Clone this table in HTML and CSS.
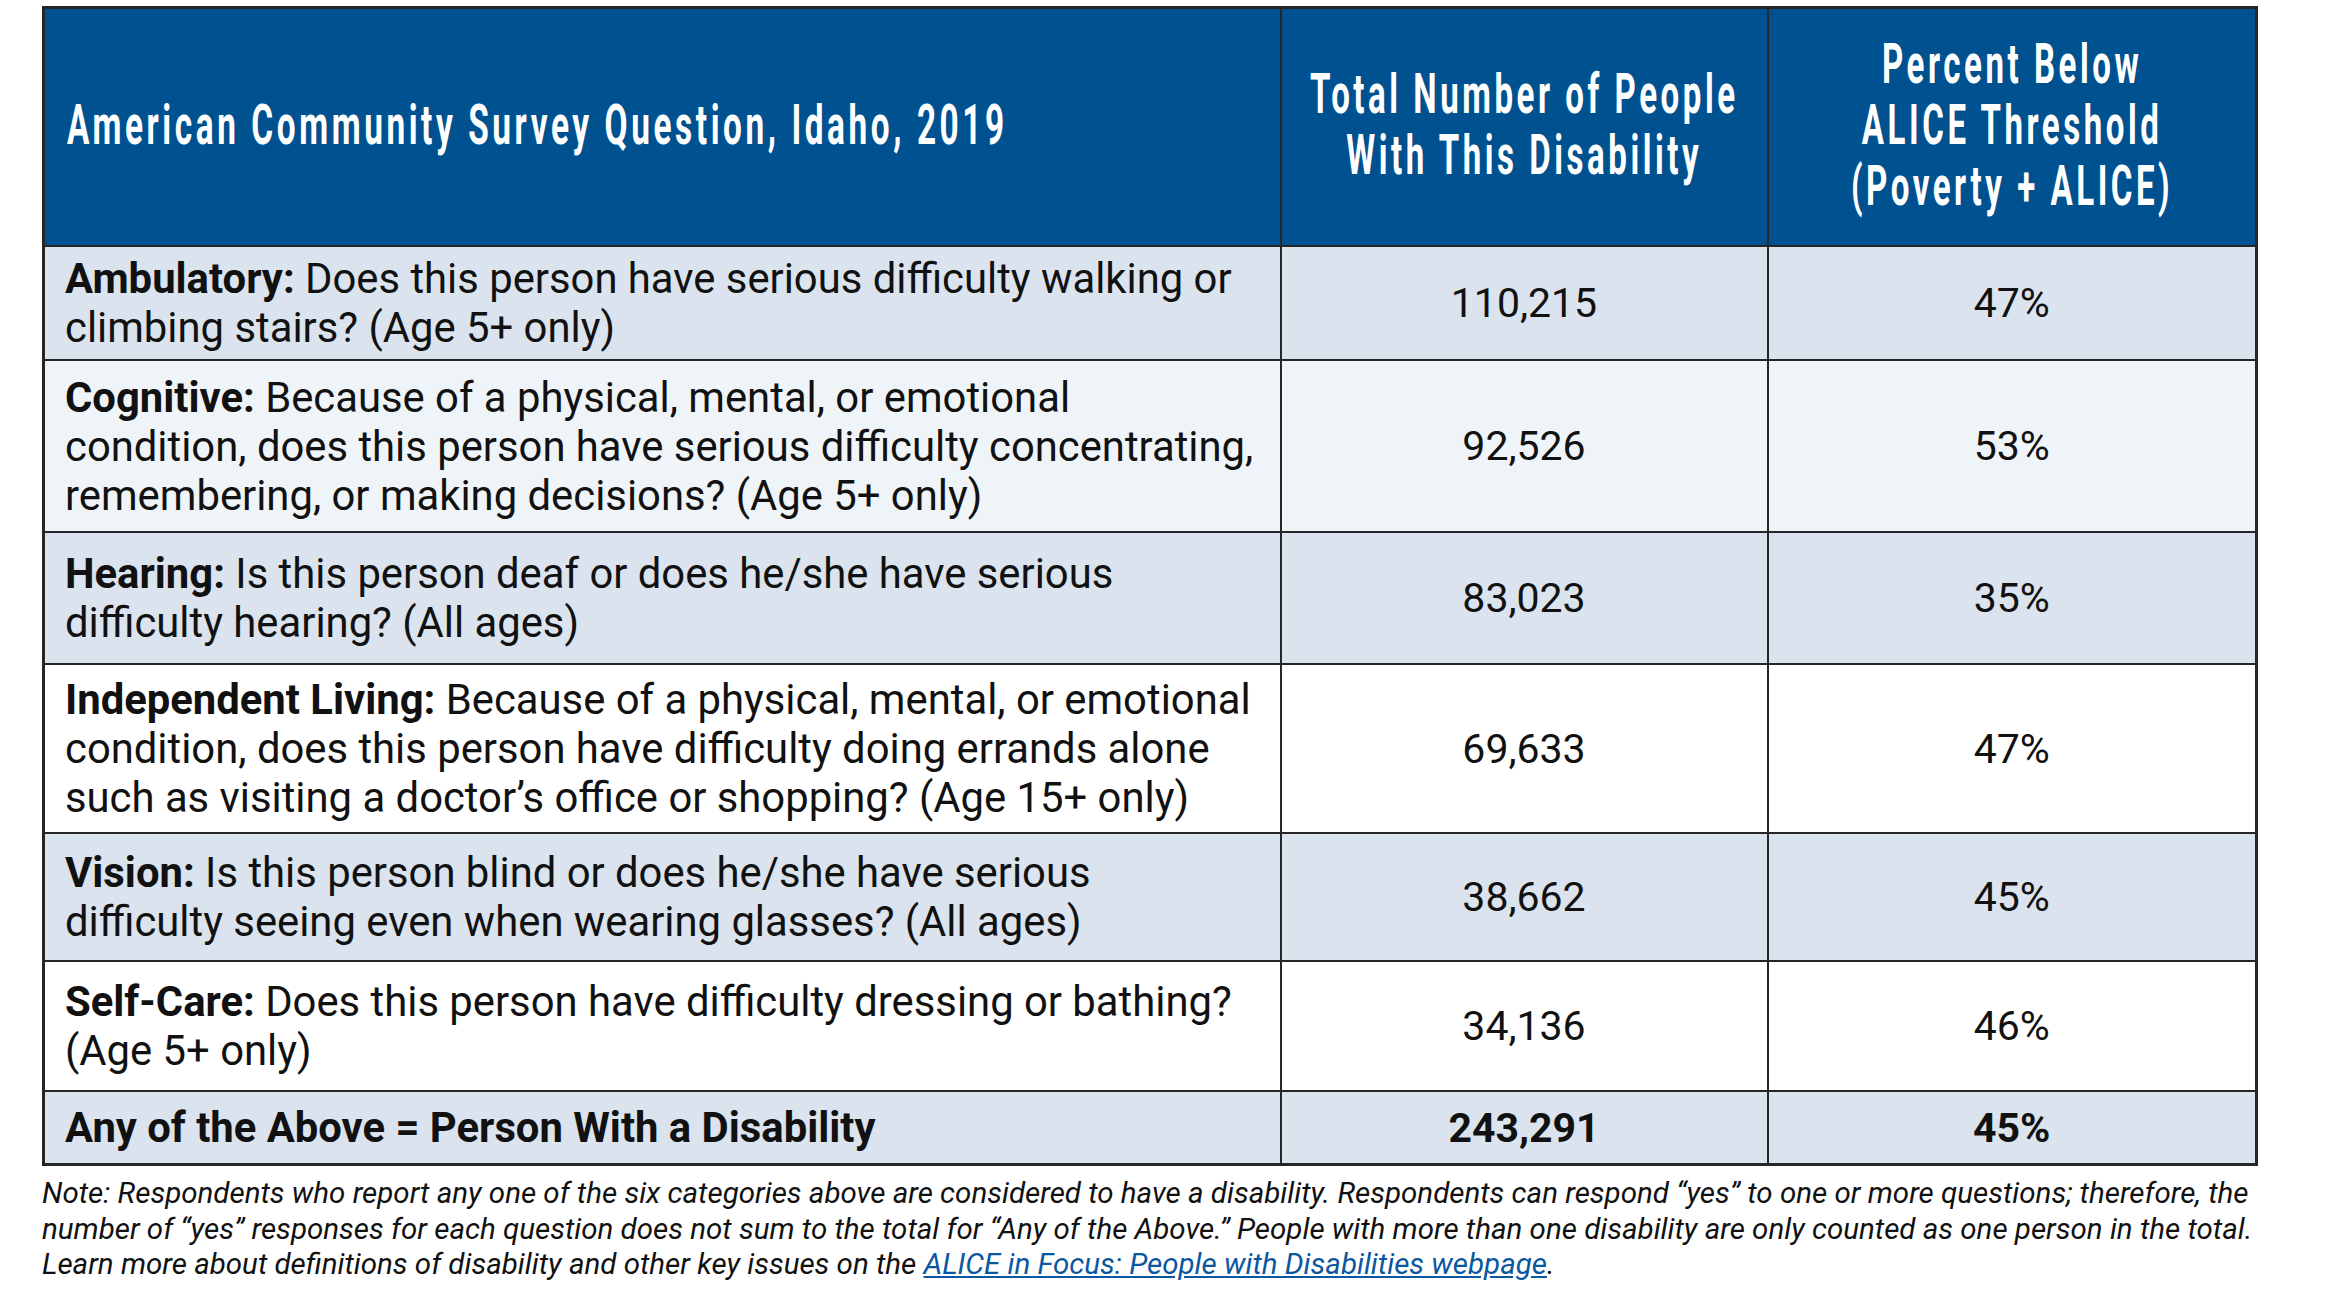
FILE: index.html
```html
<!DOCTYPE html>
<html lang="en">
<head>
<meta charset="utf-8">
<title>Disability in Idaho, 2019</title>
<link rel="stylesheet" href="styles.css">
</head>
<body>
<div class="page">
  <table class="survey">
    <colgroup>
      <col class="c-q">
      <col class="c-n">
      <col class="c-p">
    </colgroup>
    <thead>
      <tr class="r-head">
        <th class="th-q"><div class="hd-wrap hd-wrap-left"><span class="hd hd-left">American Community Survey Question, Idaho, 2019</span></div></th>
        <th class="th-c"><div class="hd-wrap"><span class="hd">Total Number of People<br>With This Disability</span></div></th>
        <th class="th-c"><div class="hd-wrap"><span class="hd">Percent Below<br>ALICE Threshold<br>(Poverty + ALICE)</span></div></th>
      </tr>
    </thead>
    <tbody>
      <tr class="r1 shade">
        <td class="q"><b>Ambulatory:</b> Does this person have serious difficulty walking or<br>climbing stairs? (Age 5+ only)</td>
        <td class="n">110,215</td>
        <td class="n">47%</td>
      </tr>
      <tr class="r2 pale">
        <td class="q"><b>Cognitive:</b> Because of a physical, mental, or emotional<br>condition, does this person have serious difficulty concentrating,<br>remembering, or making decisions? (Age 5+ only)</td>
        <td class="n">92,526</td>
        <td class="n">53%</td>
      </tr>
      <tr class="r3 shade">
        <td class="q"><b>Hearing:</b> Is this person deaf or does he/she have serious<br>difficulty hearing? (All ages)</td>
        <td class="n">83,023</td>
        <td class="n">35%</td>
      </tr>
      <tr class="r4 plain">
        <td class="q"><b>Independent Living:</b> Because of a physical, mental, or emotional<br>condition, does this person have difficulty doing errands alone<br>such as visiting a doctor’s office or shopping? (Age 15+ only)</td>
        <td class="n">69,633</td>
        <td class="n">47%</td>
      </tr>
      <tr class="r5 shade">
        <td class="q"><b>Vision:</b> Is this person blind or does he/she have serious<br>difficulty seeing even when wearing glasses? (All ages)</td>
        <td class="n">38,662</td>
        <td class="n">45%</td>
      </tr>
      <tr class="r6 plain">
        <td class="q"><b>Self-Care:</b> Does this person have difficulty dressing or bathing?<br>(Age 5+ only)</td>
        <td class="n">34,136</td>
        <td class="n">46%</td>
      </tr>
      <tr class="r-total shade">
        <td class="q"><b>Any of the Above = Person With a Disability</b></td>
        <td class="n"><b>243,291</b></td>
        <td class="n"><b>45%</b></td>
      </tr>
    </tbody>
  </table>
  <p class="note">Note: Respondents who report any one of the six categories above are considered to have a disability. Respondents can respond “yes” to one or more questions; therefore, the<br>number of “yes” responses for each question does not sum to the total for “Any of the Above.” People with more than one disability are only counted as one person in the total.<br>Learn more about definitions of disability and other key issues on the <a class="link" href="#">ALICE in Focus: People with Disabilities webpage</a>.</p>
</div>
</body>
</html>
```

FILE: styles.css
```css
html, body {
  margin: 0;
  padding: 0;
  background: #ffffff;
}

.page {
  padding: 6px 0 0 42px;
  font-family: Roboto, "Liberation Sans", sans-serif;
  color: #111111;
}

.survey {
  border-collapse: collapse;
  width: 2213px;
  table-layout: fixed;
  border: 3px solid #262626;
}

.c-q { width: 1237px; }
.c-n { width: 487px; }
.c-p { width: 489px; }

.survey th,
.survey td {
  border: 2px solid #262626;
  vertical-align: middle;
}

.r-head th {
  background: #00518f;
  color: #ffffff;
  height: 232px;
  padding: 0 0 4px 0;
  font-family: Roboto, "Liberation Sans", sans-serif;
  font-weight: 700;
  font-size: 56px;
  line-height: 61px;
}

.th-q { text-align: left; }
.th-c { text-align: center; }

.hd-wrap {
  display: flex;
  justify-content: center;
  overflow: visible;
}

.hd-wrap-left {
  justify-content: flex-start;
}

.hd {
  flex: none;
  display: block;
  letter-spacing: 6px;
  transform: scaleX(0.59);
  transform-origin: center center;
  white-space: nowrap;
  text-align: center;
}

.hd-left {
  transform: scaleX(0.596);
  transform-origin: left center;
  margin-left: 22px;
  text-align: left;
}

.q {
  font-size: 41.8px;
  line-height: 49px;
  padding: 0 6px 0 20px;
  text-align: left;
}

.q b { font-weight: 700; }

.n {
  font-size: 41px;
  line-height: 48px;
  text-align: center;
  padding: 0;
}

.shade td { background: #dae3ee; }
.pale td { background: #eff4f8; }
.plain td { background: #ffffff; }

.r1 td { height: 112px; }
.r2 td { height: 170px; }
.r3 td { height: 130px; }
.r4 td { height: 167px; }
.r5 td { height: 126px; }
.r6 td { height: 128px; }
.r-total td { height: 71px; }

.note {
  margin: 10px 0 0 0;
  font-style: italic;
  font-size: 29.5px;
  line-height: 35.5px;
  color: #111111;
  white-space: nowrap;
}

.link {
  color: #0b57a0;
  text-decoration: underline;
}
```
